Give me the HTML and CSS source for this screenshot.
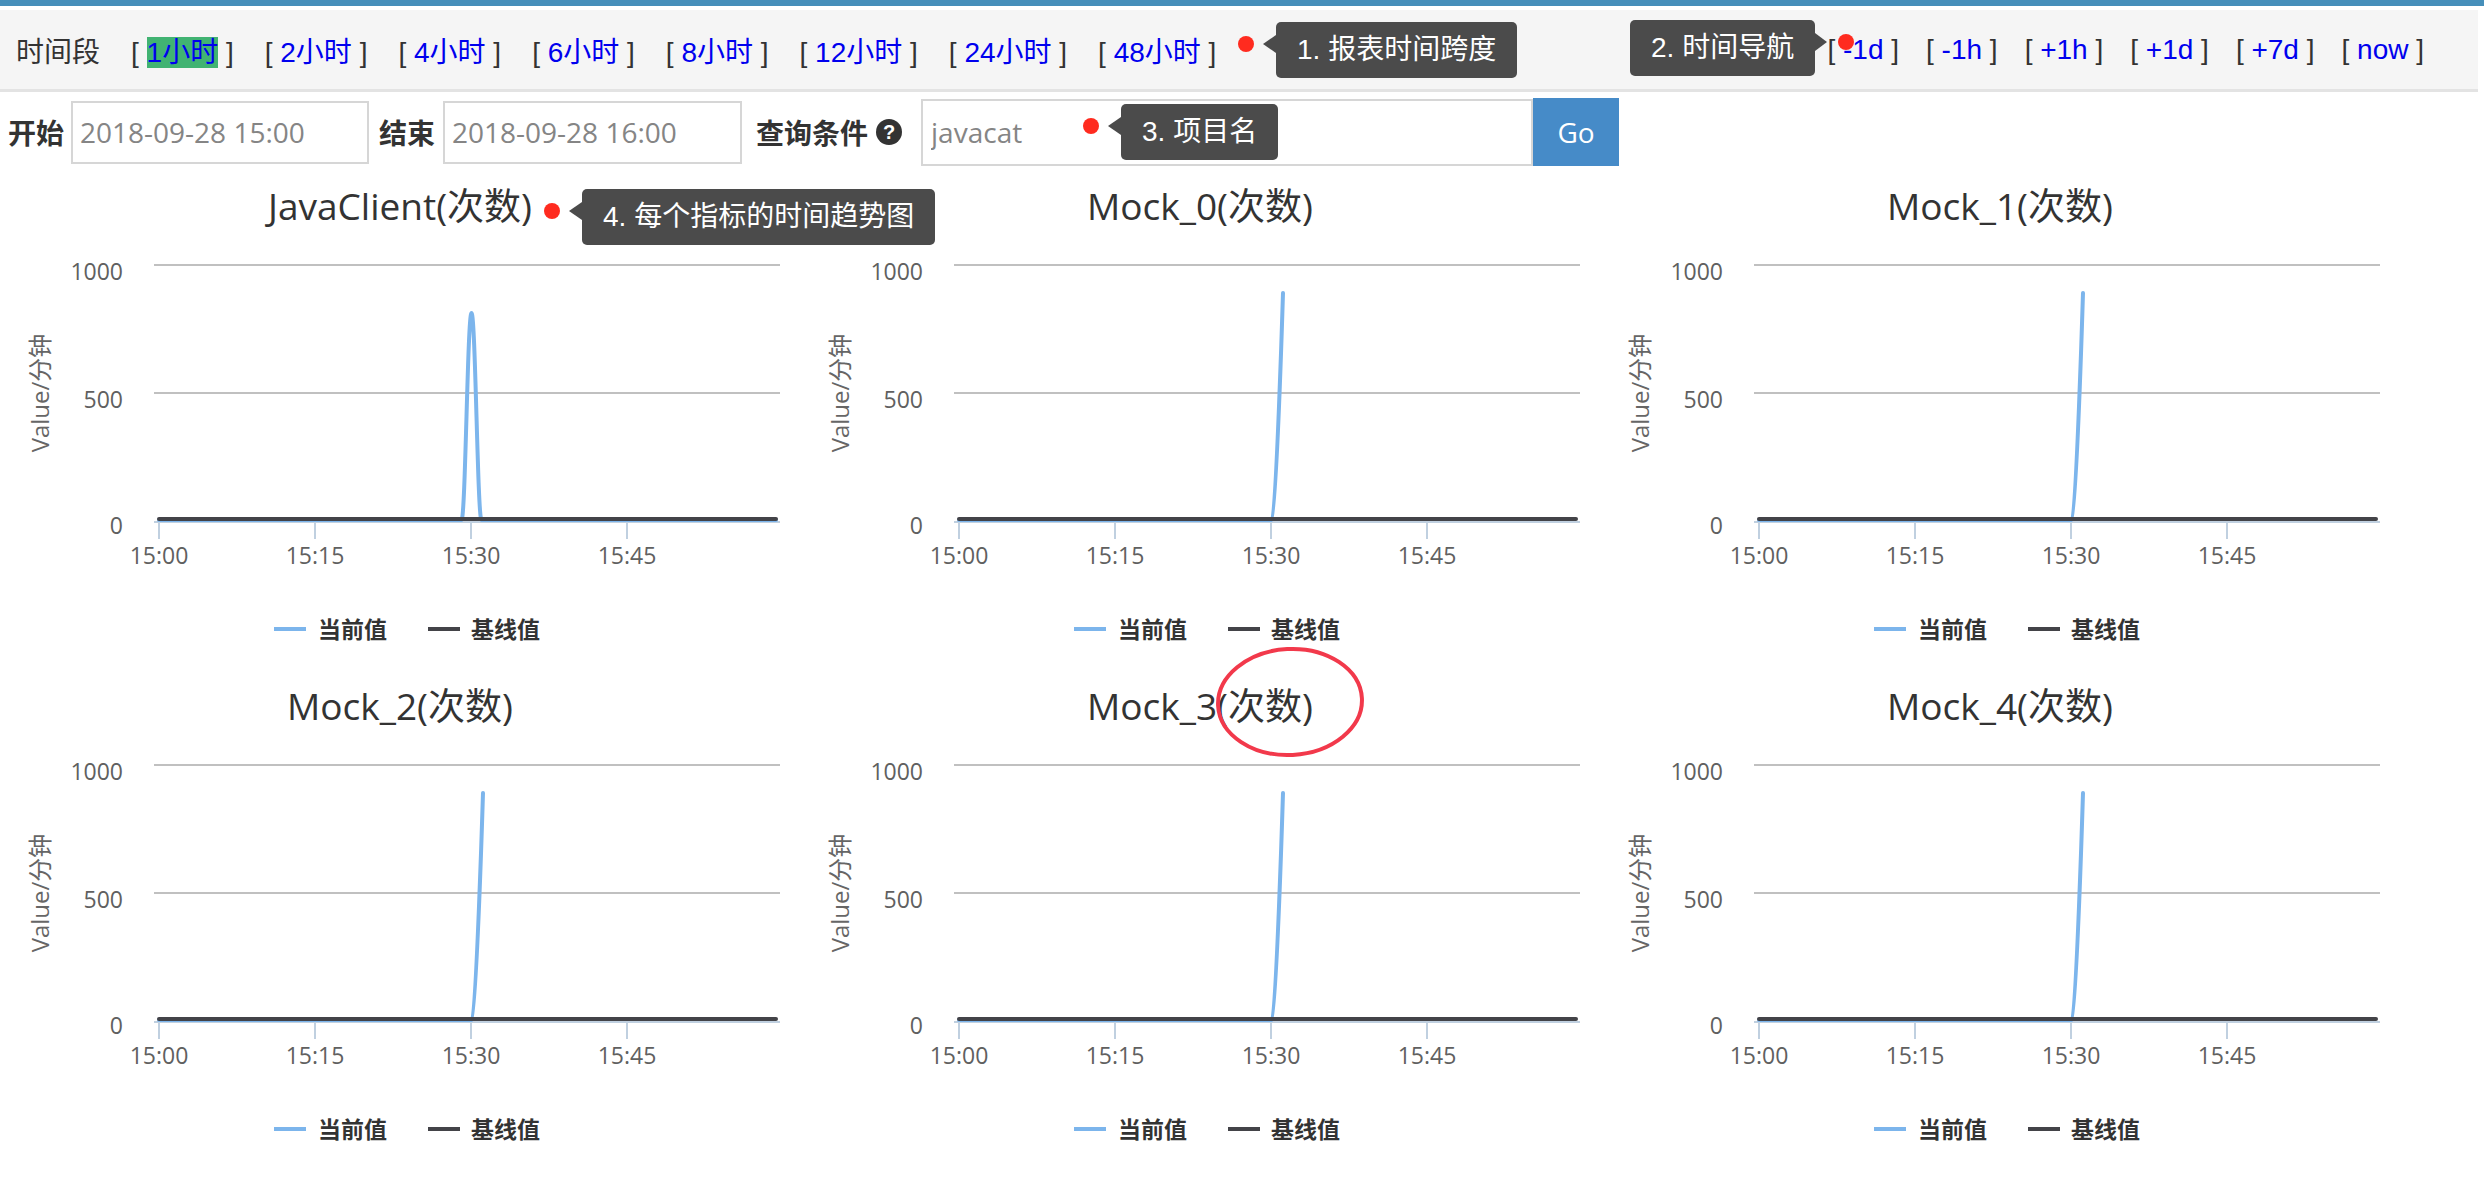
FILE: index.html
```html
<!DOCTYPE html>
<html lang="zh">
<head>
<meta charset="utf-8">
<title>CAT Report</title>
<link rel="stylesheet" href="styles.css">
</head>
<body>
<div class="topbar"></div>

<div class="toolbar">
  <span class="tb-label">时间段</span>
  <span class="grp">[ <a class="lnk active">1小时</a> ]</span>
  <span class="grp">[ <a class="lnk">2小时</a> ]</span>
  <span class="grp">[ <a class="lnk">4小时</a> ]</span>
  <span class="grp">[ <a class="lnk">6小时</a> ]</span>
  <span class="grp">[ <a class="lnk">8小时</a> ]</span>
  <span class="grp">[ <a class="lnk">12小时</a> ]</span>
  <span class="grp">[ <a class="lnk">24小时</a> ]</span>
  <span class="grp">[ <a class="lnk">48小时</a> ]</span>
  <div class="nav">
    <span class="grp">[ <a class="lnk">-7d</a> ]</span>
    <span class="grp">[ <a class="lnk">-1d</a> ]</span>
    <span class="grp">[ <a class="lnk">-1h</a> ]</span>
    <span class="grp">[ <a class="lnk">+1h</a> ]</span>
    <span class="grp">[ <a class="lnk">+1d</a> ]</span>
    <span class="grp">[ <a class="lnk">+7d</a> ]</span>
    <span class="grp">[ <a class="lnk">now</a> ]</span>
  </div>
  <span class="dot dot-1"></span>
  <span class="tip tip-left tip-1">1. 报表时间跨度</span>
  <span class="tip tip-right tip-2">2. 时间导航</span>
  <span class="dot dot-2"></span>
</div>

<div class="query">
  <span class="q-label q-label-1">开始</span>
  <input class="q-input q-input-1" type="text" value="2018-09-28 15:00">
  <span class="q-label q-label-2">结束</span>
  <input class="q-input q-input-2" type="text" value="2018-09-28 16:00">
  <span class="q-label q-label-3">查询条件</span>
  <span class="help">?</span>
  <input class="q-input q-input-3" type="text" value="javacat">
  <button class="go">Go</button>
  <span class="dot dot-3"></span>
  <span class="tip tip-left tip-3">3. 项目名</span>
</div>

<div class="charts">

  <div class="chart">
    <svg class="chart-svg" width="800" height="500" viewBox="0 0 800 500">
      <text class="c-title" x="400" y="50">JavaClient(次数)</text>
      <line class="grid" x1="154" y1="95" x2="780" y2="95"/>
      <line class="grid" x1="154" y1="223" x2="780" y2="223"/>
      <line class="axis" x1="154" y1="352" x2="780" y2="352"/>
      <line class="tick" x1="159" y1="352" x2="159" y2="369"/>
      <line class="tick" x1="315" y1="352" x2="315" y2="369"/>
      <line class="tick" x1="471" y1="352" x2="471" y2="369"/>
      <line class="tick" x1="627" y1="352" x2="627" y2="369"/>
      <text class="ylab" x="123" y="110">1000</text>
      <text class="ylab" x="123" y="238">500</text>
      <text class="ylab" x="123" y="364">0</text>
      <text class="xlab" x="159" y="394">15:00</text>
      <text class="xlab" x="315" y="394">15:15</text>
      <text class="xlab" x="471" y="394">15:30</text>
      <text class="xlab" x="627" y="394">15:45</text>
      <text class="ytitle" transform="translate(49,223) rotate(-90)">Value/分钟</text>
      <path class="s-cur" d="M159,350 L461.5,350 C465.5,350 467.5,143 471.5,143 C475.5,143 477.5,350 481.5,350 L776,350"/>
      <path class="s-base" d="M159,349 L776,349"/>
      <line class="lg-cur" x1="274" y1="459" x2="306" y2="459"/>
      <text class="lg-text" x="318" y="468">当前值</text>
      <line class="lg-base" x1="428" y1="459" x2="460" y2="459"/>
      <text class="lg-text" x="471" y="468">基线值</text>
    </svg>
    <span class="dot dot-4"></span>
    <span class="tip tip-left tip-4">4. 每个指标的时间趋势图</span>
  </div>

  <div class="chart">
    <svg class="chart-svg" width="800" height="500" viewBox="0 0 800 500">
      <text class="c-title" x="400" y="50">Mock_0(次数)</text>
      <line class="grid" x1="154" y1="95" x2="780" y2="95"/>
      <line class="grid" x1="154" y1="223" x2="780" y2="223"/>
      <line class="axis" x1="154" y1="352" x2="780" y2="352"/>
      <line class="tick" x1="159" y1="352" x2="159" y2="369"/>
      <line class="tick" x1="315" y1="352" x2="315" y2="369"/>
      <line class="tick" x1="471" y1="352" x2="471" y2="369"/>
      <line class="tick" x1="627" y1="352" x2="627" y2="369"/>
      <text class="ylab" x="123" y="110">1000</text>
      <text class="ylab" x="123" y="238">500</text>
      <text class="ylab" x="123" y="364">0</text>
      <text class="xlab" x="159" y="394">15:00</text>
      <text class="xlab" x="315" y="394">15:15</text>
      <text class="xlab" x="471" y="394">15:30</text>
      <text class="xlab" x="627" y="394">15:45</text>
      <text class="ytitle" transform="translate(49,223) rotate(-90)">Value/分钟</text>
      <path class="s-cur" d="M159,350 L472,350 C476,350 483,123 483,123"/>
      <path class="s-base" d="M159,349 L776,349"/>
      <line class="lg-cur" x1="274" y1="459" x2="306" y2="459"/>
      <text class="lg-text" x="318" y="468">当前值</text>
      <line class="lg-base" x1="428" y1="459" x2="460" y2="459"/>
      <text class="lg-text" x="471" y="468">基线值</text>
    </svg>
  </div>

  <div class="chart">
    <svg class="chart-svg" width="800" height="500" viewBox="0 0 800 500">
      <text class="c-title" x="400" y="50">Mock_1(次数)</text>
      <line class="grid" x1="154" y1="95" x2="780" y2="95"/>
      <line class="grid" x1="154" y1="223" x2="780" y2="223"/>
      <line class="axis" x1="154" y1="352" x2="780" y2="352"/>
      <line class="tick" x1="159" y1="352" x2="159" y2="369"/>
      <line class="tick" x1="315" y1="352" x2="315" y2="369"/>
      <line class="tick" x1="471" y1="352" x2="471" y2="369"/>
      <line class="tick" x1="627" y1="352" x2="627" y2="369"/>
      <text class="ylab" x="123" y="110">1000</text>
      <text class="ylab" x="123" y="238">500</text>
      <text class="ylab" x="123" y="364">0</text>
      <text class="xlab" x="159" y="394">15:00</text>
      <text class="xlab" x="315" y="394">15:15</text>
      <text class="xlab" x="471" y="394">15:30</text>
      <text class="xlab" x="627" y="394">15:45</text>
      <text class="ytitle" transform="translate(49,223) rotate(-90)">Value/分钟</text>
      <path class="s-cur" d="M159,350 L472,350 C476,350 483,123 483,123"/>
      <path class="s-base" d="M159,349 L776,349"/>
      <line class="lg-cur" x1="274" y1="459" x2="306" y2="459"/>
      <text class="lg-text" x="318" y="468">当前值</text>
      <line class="lg-base" x1="428" y1="459" x2="460" y2="459"/>
      <text class="lg-text" x="471" y="468">基线值</text>
    </svg>
  </div>

  <div class="chart">
    <svg class="chart-svg" width="800" height="500" viewBox="0 0 800 500">
      <text class="c-title" x="400" y="50">Mock_2(次数)</text>
      <line class="grid" x1="154" y1="95" x2="780" y2="95"/>
      <line class="grid" x1="154" y1="223" x2="780" y2="223"/>
      <line class="axis" x1="154" y1="352" x2="780" y2="352"/>
      <line class="tick" x1="159" y1="352" x2="159" y2="369"/>
      <line class="tick" x1="315" y1="352" x2="315" y2="369"/>
      <line class="tick" x1="471" y1="352" x2="471" y2="369"/>
      <line class="tick" x1="627" y1="352" x2="627" y2="369"/>
      <text class="ylab" x="123" y="110">1000</text>
      <text class="ylab" x="123" y="238">500</text>
      <text class="ylab" x="123" y="364">0</text>
      <text class="xlab" x="159" y="394">15:00</text>
      <text class="xlab" x="315" y="394">15:15</text>
      <text class="xlab" x="471" y="394">15:30</text>
      <text class="xlab" x="627" y="394">15:45</text>
      <text class="ytitle" transform="translate(49,223) rotate(-90)">Value/分钟</text>
      <path class="s-cur" d="M159,350 L472,350 C476,350 483,123 483,123"/>
      <path class="s-base" d="M159,349 L776,349"/>
      <line class="lg-cur" x1="274" y1="459" x2="306" y2="459"/>
      <text class="lg-text" x="318" y="468">当前值</text>
      <line class="lg-base" x1="428" y1="459" x2="460" y2="459"/>
      <text class="lg-text" x="471" y="468">基线值</text>
    </svg>
  </div>

  <div class="chart">
    <svg class="chart-svg" width="800" height="500" viewBox="0 0 800 500">
      <text class="c-title" x="400" y="50">Mock_3(次数)</text>
      <line class="grid" x1="154" y1="95" x2="780" y2="95"/>
      <line class="grid" x1="154" y1="223" x2="780" y2="223"/>
      <line class="axis" x1="154" y1="352" x2="780" y2="352"/>
      <line class="tick" x1="159" y1="352" x2="159" y2="369"/>
      <line class="tick" x1="315" y1="352" x2="315" y2="369"/>
      <line class="tick" x1="471" y1="352" x2="471" y2="369"/>
      <line class="tick" x1="627" y1="352" x2="627" y2="369"/>
      <text class="ylab" x="123" y="110">1000</text>
      <text class="ylab" x="123" y="238">500</text>
      <text class="ylab" x="123" y="364">0</text>
      <text class="xlab" x="159" y="394">15:00</text>
      <text class="xlab" x="315" y="394">15:15</text>
      <text class="xlab" x="471" y="394">15:30</text>
      <text class="xlab" x="627" y="394">15:45</text>
      <text class="ytitle" transform="translate(49,223) rotate(-90)">Value/分钟</text>
      <path class="s-cur" d="M159,350 L472,350 C476,350 483,123 483,123"/>
      <path class="s-base" d="M159,349 L776,349"/>
      <line class="lg-cur" x1="274" y1="459" x2="306" y2="459"/>
      <text class="lg-text" x="318" y="468">当前值</text>
      <line class="lg-base" x1="428" y1="459" x2="460" y2="459"/>
      <text class="lg-text" x="471" y="468">基线值</text>
    </svg>
    <svg class="ring" width="160" height="120" viewBox="0 0 160 120">
      <ellipse cx="80" cy="60" rx="72" ry="53" transform="rotate(-3 80 60)"/>
    </svg>
  </div>

  <div class="chart">
    <svg class="chart-svg" width="800" height="500" viewBox="0 0 800 500">
      <text class="c-title" x="400" y="50">Mock_4(次数)</text>
      <line class="grid" x1="154" y1="95" x2="780" y2="95"/>
      <line class="grid" x1="154" y1="223" x2="780" y2="223"/>
      <line class="axis" x1="154" y1="352" x2="780" y2="352"/>
      <line class="tick" x1="159" y1="352" x2="159" y2="369"/>
      <line class="tick" x1="315" y1="352" x2="315" y2="369"/>
      <line class="tick" x1="471" y1="352" x2="471" y2="369"/>
      <line class="tick" x1="627" y1="352" x2="627" y2="369"/>
      <text class="ylab" x="123" y="110">1000</text>
      <text class="ylab" x="123" y="238">500</text>
      <text class="ylab" x="123" y="364">0</text>
      <text class="xlab" x="159" y="394">15:00</text>
      <text class="xlab" x="315" y="394">15:15</text>
      <text class="xlab" x="471" y="394">15:30</text>
      <text class="xlab" x="627" y="394">15:45</text>
      <text class="ytitle" transform="translate(49,223) rotate(-90)">Value/分钟</text>
      <path class="s-cur" d="M159,350 L472,350 C476,350 483,123 483,123"/>
      <path class="s-base" d="M159,349 L776,349"/>
      <line class="lg-cur" x1="274" y1="459" x2="306" y2="459"/>
      <text class="lg-text" x="318" y="468">当前值</text>
      <line class="lg-base" x1="428" y1="459" x2="460" y2="459"/>
      <text class="lg-text" x="471" y="468">基线值</text>
    </svg>
  </div>

</div>
</body>
</html>
```

FILE: styles.css
```css
html, body {
  margin: 0;
  padding: 0;
  background: #ffffff;
}

body {
  font-family: "Liberation Sans", "Noto Sans CJK SC", sans-serif;
  color: #333333;
}

.topbar {
  height: 6px;
  background: #468fba;
  margin-bottom: 4px;
}

/* ---------- toolbar ---------- */
.toolbar {
  position: relative;
  display: flex;
  align-items: center;
  gap: 31px;
  height: 79px;
  margin-right: 6px;
  padding: 0 54px 0 16px;
  background: #f5f5f5;
  border-bottom: 3px solid #e3e3e3;
  font-size: 28px;
  color: #333333;
  white-space: nowrap;
}

.tb-label {
  color: #333333;
}

.grp {
  color: #333333;
}

.lnk {
  color: #0000ee;
  text-decoration: none;
}

.lnk.active {
  background: #41b372;
}

.nav {
  display: flex;
  align-items: center;
  gap: 27px;
  margin-left: auto;
}

/* ---------- annotations ---------- */
.dot {
  position: absolute;
  width: 16px;
  height: 16px;
  border-radius: 50%;
  background: #ff2b1f;
  z-index: 3;
}

.tip {
  position: absolute;
  z-index: 2;
  height: 56px;
  line-height: 56px;
  padding: 0 21px;
  background: #4b4b4b;
  border-radius: 5px;
  color: #ffffff;
  font-family: "Liberation Sans", "Noto Sans CJK SC", sans-serif;
  font-size: 28px;
  font-weight: normal;
  white-space: nowrap;
}

.tip-left::before {
  content: "";
  position: absolute;
  left: -13px;
  top: 13px;
  border-top: 9px solid transparent;
  border-bottom: 9px solid transparent;
  border-right: 13px solid #4b4b4b;
}

.tip-right::after {
  content: "";
  position: absolute;
  right: -12px;
  top: 13px;
  border-top: 9px solid transparent;
  border-bottom: 9px solid transparent;
  border-left: 12px solid #4b4b4b;
}

.dot-1 { left: 1238px; top: 26px; }
.tip-1 { left: 1276px; top: 12px; }
.dot-2 { left: 1838px; top: 24px; }
.tip-2 { left: 1630px; top: 10px; }
.dot-3 { left: 1083px; top: 26px; }
.tip-3 { left: 1121px; top: 12px; }
.dot-4 { left: 544px; top: 33px; }
.tip-4 { left: 582px; top: 19px; }

/* ---------- query row ---------- */
.query {
  position: relative;
  display: flex;
  align-items: center;
  height: 68px;
  padding: 6px 0 4px 8px;
}

.q-label {
  font-family: "Noto Sans CJK SC", sans-serif;
  font-weight: bold;
  font-size: 28px;
  color: #333333;
}

.q-label-1 { margin-right: 7px; }
.q-label-2 { margin-left: 10px; margin-right: 8px; }
.q-label-3 { margin-left: 14px; margin-right: 8px; }

.q-input {
  box-sizing: border-box;
  height: 63px;
  margin: 0;
  padding: 0 7px;
  border: 2px solid #d6d6d6;
  border-radius: 0;
  background: #ffffff;
  font-family: "Open Sans", "Noto Sans CJK SC", sans-serif;
  font-size: 28px;
  color: #858585;
  outline: none;
}

.q-input-1 { width: 298px; }
.q-input-2 { width: 299px; }
.q-input-3 { width: 612px; height: 67px; padding-left: 8px; }

.help {
  display: inline-flex;
  align-items: center;
  justify-content: center;
  width: 26px;
  height: 26px;
  margin-right: 19px;
  border-radius: 50%;
  background: #333333;
  color: #ffffff;
  font-family: "Liberation Sans", sans-serif;
  font-weight: bold;
  font-size: 20px;
  line-height: 1;
}

.go {
  box-sizing: border-box;
  width: 86px;
  height: 68px;
  margin: 0;
  padding: 0;
  border: none;
  border-radius: 0;
  background: #468bc8;
  color: #ffffff;
  font-family: "Open Sans", sans-serif;
  font-size: 28px;
}

/* ---------- charts ---------- */
.charts {
  display: grid;
  grid-template-columns: repeat(3, 800px);
}

.chart {
  position: relative;
  width: 800px;
  height: 500px;
}

.chart-svg {
  display: block;
}

.c-title {
  font-family: "Open Sans", "Noto Sans CJK SC", sans-serif;
  font-size: 37px;
  fill: #333333;
  text-anchor: middle;
}

.grid {
  stroke: #c0c0c0;
  stroke-width: 2;
}

.axis, .tick {
  stroke: #c0d0e0;
  stroke-width: 2;
}

.ylab {
  font-family: "Open Sans", sans-serif;
  font-size: 23px;
  fill: #606060;
  text-anchor: end;
}

.xlab {
  font-family: "Open Sans", sans-serif;
  font-size: 23px;
  fill: #606060;
  text-anchor: middle;
}

.ytitle {
  font-family: "Open Sans", "Noto Sans CJK SC", sans-serif;
  font-size: 24px;
  fill: #666666;
  text-anchor: middle;
}

.s-cur {
  fill: none;
  stroke: #7cb5ec;
  stroke-width: 4;
  stroke-linejoin: round;
  stroke-linecap: round;
}

.s-base {
  fill: none;
  stroke: #434348;
  stroke-width: 4;
  stroke-linecap: round;
}

.lg-cur {
  stroke: #7cb5ec;
  stroke-width: 4;
}

.lg-base {
  stroke: #434348;
  stroke-width: 4;
}

.lg-text {
  font-family: "Noto Sans CJK SC", sans-serif;
  font-weight: bold;
  font-size: 23px;
  fill: #333333;
}

.ring {
  position: absolute;
  left: 410px;
  top: -28px;
  overflow: visible;
}

.ring ellipse {
  fill: none;
  stroke: #f2394b;
  stroke-width: 4;
}
```
